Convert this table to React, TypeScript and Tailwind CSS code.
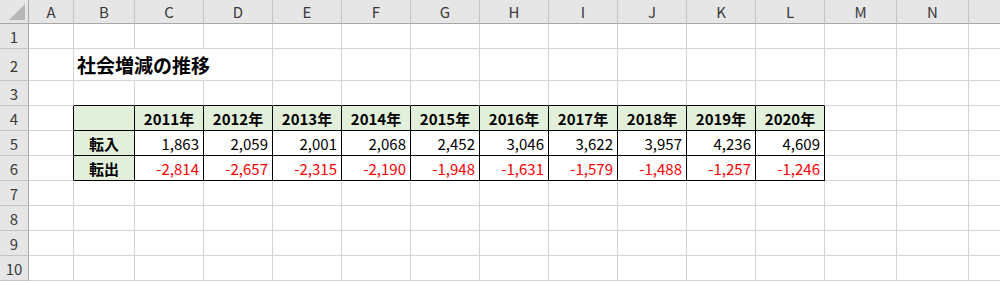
import React from "react";

const cols = ["A", "B", "C", "D", "E", "F", "G", "H", "I", "J", "K", "L", "M", "N", ""];
const years = ["2011年", "2012年", "2013年", "2014年", "2015年", "2016年", "2017年", "2018年", "2019年", "2020年"];
const inflow = ["1,863", "2,059", "2,001", "2,068", "2,452", "3,046", "3,622", "3,957", "4,236", "4,609"];
const outflow = ["-2,814", "-2,657", "-2,315", "-2,190", "-1,948", "-1,631", "-1,579", "-1,488", "-1,257", "-1,246"];

export default function App() {
  const rows = [1, 2, 3, 4, 5, 6, 7, 8, 9, 10];
  const cells: React.ReactNode[] = [];

  cells.push(
    <div key="corner" className="relative bg-[#e6e6e6] border-r border-b border-[#a8a8a8]">
      <div className="absolute right-[3px] bottom-[3px] w-0 h-0 border-l-[16px] border-l-transparent border-b-[16px] border-b-[#b6b6b6]" />
    </div>
  );
  cols.forEach((c, i) => {
    cells.push(
      <div
        key={"h" + i}
        className={`flex items-center justify-center bg-[#e6e6e6] border-b border-[#a8a8a8] text-[15px] text-[#3a3a3a] ${i < cols.length - 1 ? "border-r border-r-[#c4c4c4]" : ""}`}
      >
        {c}
      </div>
    );
  });

  rows.forEach((r) => {
    cells.push(
      <div
        key={"r" + r}
        className="flex items-center justify-center bg-[#e6e6e6] border-r border-r-[#a8a8a8] border-b border-b-[#c4c4c4] text-[15px] text-[#3a3a3a] pt-[1px]"
      >
        {r}
      </div>
    );
    cols.forEach((c, ci) => {
      const inTable = r >= 4 && r <= 6 && ci >= 1 && ci <= 11;
      let rightBlack = false;
      let bottomBlack = false;
      if (inTable) {
        rightBlack = true;
        bottomBlack = true;
      }
      if (r === 3 && ci >= 1 && ci <= 11) bottomBlack = true;
      if (ci === 0 && r >= 4 && r <= 6) rightBlack = true;
      const hideRight = r === 2 && (ci === 1 || ci === 2);
      const bg = inTable && (r === 4 || ci === 1) ? "bg-[#e2efda]" : "bg-white";
      const rb = rightBlack ? "border-r-black" : hideRight ? "border-r-white" : "border-r-[#d4d4d4]";
      const bb = bottomBlack ? "border-b-black" : "border-b-[#d4d4d4]";
      let content: React.ReactNode = null;
      let align = "";
      if (r === 2 && ci === 1) {
        content = (
          <span className="whitespace-nowrap text-[19px] font-bold text-black pl-[3px] pb-[6px]">社会増減の推移</span>
        );
        align = "items-end relative z-10";
      } else if (r === 4 && ci >= 2 && ci <= 11) {
        content = <span className="font-bold text-[15px] text-black">{years[ci - 2]}</span>;
        align = "items-center justify-center";
      } else if ((r === 5 || r === 6) && ci === 1) {
        content = <span className="font-bold text-[15px] text-black">{r === 5 ? "転入" : "転出"}</span>;
        align = "items-center justify-center";
      } else if (r === 5 && ci >= 2 && ci <= 11) {
        content = <span className="text-[15px] text-black">{inflow[ci - 2]}</span>;
        align = "items-center justify-end pr-[4px]";
      } else if (r === 6 && ci >= 2 && ci <= 11) {
        content = <span className="text-[15px] text-[#ff0000]">{outflow[ci - 2]}</span>;
        align = "items-center justify-end pr-[4px]";
      }
      cells.push(
        <div key={r + "-" + ci} className={`flex ${align} ${bg} border-r border-b ${rb} ${bb} ${ci === cols.length - 1 ? "border-r-0" : ""}`}>
          {content}
        </div>
      );
    });
  });

  return (
    <div
      className="w-[1000px] h-[282px] overflow-hidden bg-white"
      style={{ fontFamily: '"Noto Sans CJK JP", "Noto Sans", sans-serif' }}
    >
      <div className="grid grid-cols-[29px_45px_61px_repeat(10,69px)_72px_72px_1fr] grid-rows-[24px_25px_32px_repeat(8,25px)] leading-none">
        {cells}
      </div>
    </div>
  );
}
